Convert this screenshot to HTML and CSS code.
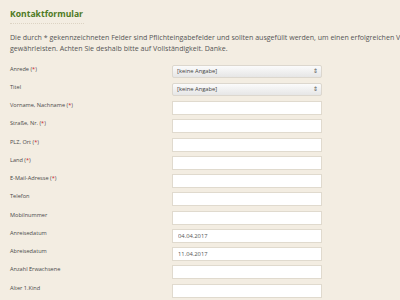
FILE: index.html
```html
<!DOCTYPE html>
<html lang="de">
<head>
  <meta charset="UTF-8" />
  <title>Kontaktformular</title>
  <link rel="stylesheet" href="styles.css">
</head>
<body>

<div class="page">
  <h1 class="title">Kontaktformular</h1>

  <p class="intro">Die durch * gekennzeichneten Felder sind Pflichteingabefelder und sollten ausgefüllt werden, um einen erfolgreichen Versand zu gewährleisten. Achten Sie deshalb bitte auf Vollständigkeit. Danke.</p>

  <form class="contact">
    <label>Anrede <span class="req">(<em>*</em>)</span></label>
    <div class="select"><span>[keine Angabe]</span><span class="arrows">&#8661;</span></div>

    <label>Titel</label>
    <div class="select"><span>[keine Angabe]</span><span class="arrows">&#8661;</span></div>

    <label>Vorname, Nachname <span class="req">(<em>*</em>)</span></label>
    <input type="text">

    <label>Straße, Nr. <span class="req">(<em>*</em>)</span></label>
    <input type="text">

    <label>PLZ, Ort <span class="req">(<em>*</em>)</span></label>
    <input type="text">

    <label>Land <span class="req">(<em>*</em>)</span></label>
    <input type="text">

    <label>E-Mail-Adresse <span class="req">(<em>*</em>)</span></label>
    <input type="text">

    <label>Telefon</label>
    <input type="text">

    <label>Mobilnummer</label>
    <input type="text">

    <label>Anreisedatum</label>
    <input type="text" value="04.04.2017">

    <label>Abreisedatum</label>
    <input type="text" value="11.04.2017">

    <label>Anzahl Erwachsene</label>
    <input type="text">

    <label>Alter 1.Kind</label>
    <input type="text">
  </form>
</div>

</body>
</html>
```

FILE: styles.css
```css
html, body {
  margin: 0;
  overflow: hidden;
}

body {
  background: #f3ede2;
  color: #555;
  font-family: "Open Sans", "Liberation Sans", sans-serif;
}

.page {
  width: 440px;
  padding: 0 10px;
}

.title {
  width: fit-content;
  margin: 0;
  padding: 7.5px 1px 2.5px 0;
  font-size: 8.6px;
  line-height: 13px;
  font-weight: 700;
  color: #4d7a22;
  border-bottom: 1px dotted #dcd3c3;
}

.intro {
  margin: 7.5px 0 11px;
  font-size: 7.05px;
  line-height: 11px;
  color: #555;
}

.contact {
  display: grid;
  grid-template-columns: 162px 150px;
  grid-auto-rows: 14px;
  row-gap: 4.25px;
}

.contact label {
  font-size: 5.6px;
  line-height: 9px;
  color: #4a4a4a;
}

.req em {
  font-style: normal;
  color: #c8202a;
}

.contact input {
  box-sizing: border-box;
  width: 150px;
  height: 14px;
  margin: 0;
  padding: 0 5px;
  border: 1px solid #e0dace;
  background: #fff;
  font-family: inherit;
  font-size: 5.8px;
  color: #555;
  outline: none;
}

.select {
  box-sizing: border-box;
  height: 13px;
  display: flex;
  justify-content: space-between;
  align-items: center;
  padding: 0 3px 0 4px;
  border: 1px solid #dcd7ce;
  border-radius: 2px;
  background: linear-gradient(#fbfbfb, #e6e6e6);
  font-size: 5.8px;
  color: #444;
}

.select .arrows {
  font-size: 6px;
  color: #555;
}
```
